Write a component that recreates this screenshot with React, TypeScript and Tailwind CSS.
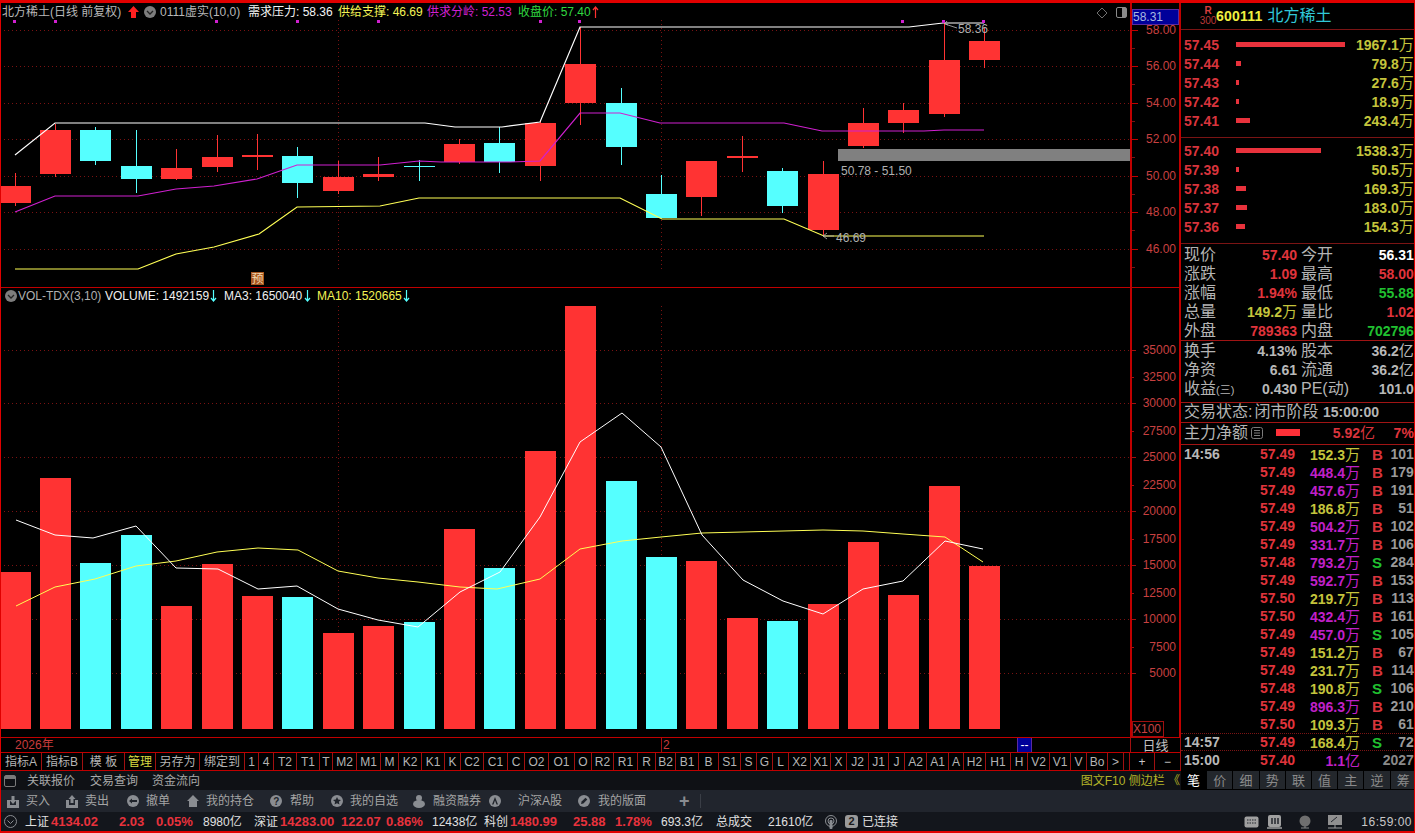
import * as React from "react";

const candles = [
  [186, 203, 173, 206, 0], [130, 174, 124, 177, 0], [130, 161, 127, 165, 1], [166, 179, 130, 193, 1],
  [168, 179, 149, 180, 0], [157, 167, 135, 172, 0], [155, 157, 134, 170, 0], [156, 183, 147, 198, 1],
  [177, 191, 161, 194, 0], [174, 177, 157, 181, 0], [166, 167, 160, 181, 1], [144, 162, 139, 164, 0],
  [143, 162, 127, 173, 1], [123, 166, 121, 181, 0], [64, 103, 27, 125, 0], [103, 147, 88, 165, 1],
  [194, 218, 175, 218, 1], [161, 197, 161, 216, 0], [156, 158, 136, 172, 0], [171, 206, 168, 213, 1],
  [174, 230, 161, 235, 0], [123, 146, 108, 148, 0], [110, 123, 103, 133, 0], [60, 114, 23, 117, 0],
  [41, 60, 28, 68, 0],
];

const bars = [
  [572, 0], [478, 0], [563, 1], [535, 1], [606, 0], [564, 0], [596, 0], [597, 1], [633, 0], [626, 0],
  [622, 1], [529, 0], [568, 1], [451, 0], [306, 0], [481, 1], [557, 1], [561, 0], [618, 0], [621, 1],
  [604, 0], [542, 0], [595, 0], [486, 0], [566, 0],
];

const barX = [0, 40, 80, 121, 161, 202, 242, 282, 323, 363, 404, 444, 484, 525, 565, 606, 646, 686, 727, 767, 808, 848, 888, 929, 969];

const whiteLine = "15,155 55,123 425,123 455,127 502,127 540,122 580,27 909,27 943,23 984,23";
const purpleLine = "15,212 55,196 138,196 176,189 214,186 257,179 297,165 380,165 419,161 441,162 510,162 540,161 580,113 620,113 660,123 784,123 822,131 924,131 944,130 984,130";
const yellowLine = "15,269 138,269 176,254 214,247 259,234 297,207 380,206 419,198 620,198 662,219 784,219 824,236 984,236";
const ma3Line = "16,520 55,535 93,538 136,526 176,568 218,569 258,589 297,586 338,609 378,620 418,627 460,592 500,572 540,517 580,442 622,413 661,447 702,535 743,580 783,601 823,614 863,589 903,581 945,541 983,549";
const ma10Line = "16,606 55,587 95,579 136,566 176,561 217,552 258,548 298,550 338,571 378,578 418,582 460,587 497,589 540,579 580,549 622,541 661,537 702,533 743,532 783,531 823,530 863,531 903,534 945,537 983,562";

const dots = [14, 55, 216, 297, 378, 540, 579, 902, 943, 983];

const priceTicks = [
  [30, "58.00"], [66, "56.00"], [103, "54.00"], [139, "52.00"], [176, "50.00"], [212, "48.00"], [249, "46.00"],
];
const volTicks = [
  [350, "35000", 1], [377, "32500", 0], [403, "30000", 1], [431, "27500", 0], [457, "25000", 1], [485, "22500", 0],
  [511, "20000", 1], [539, "17500", 0], [565, "15000", 1], [593, "12500", 0], [619, "10000", 1], [647, "7500", 0], [673, "5000", 1],
];

const RED = "#ff3333";
const CYAN = "#55ffff";
const DOT = "#7a1212";

const KlineChart = () => (
  <svg className="block w-[1129px] h-[284px]" viewBox="1 3 1129 284">
    {priceTicks.map(([y]) => (
      <line key={y} x1="4" x2="1130" y1={(y as number) + 0.5} y2={(y as number) + 0.5} stroke={DOT} strokeDasharray="1 3" />
    ))}
    <line x1="338.500" x2="338.500" y1="20" y2="272" stroke={DOT} strokeDasharray="1 3" />
    <line x1="661.500" x2="661.500" y1="20" y2="272" stroke={DOT} strokeDasharray="1 3" />
    {candles.map((c, i) => {
      const x = barX[i];
      const color = c[4] ? CYAN : RED;
      return (
        <g key={i}>
          <line x1={x + 15.5} x2={x + 15.5} y1={c[2]} y2={c[3]} stroke={color} />
          <rect x={x} y={c[0]} width="31" height={c[1] - c[0]} fill={color} />
        </g>
      );
    })}
    <rect x="838" y="149" width="292" height="12" fill="#808080" />
    <polyline points={yellowLine} fill="none" stroke="#ffff55" strokeWidth="1.2" />
    <polyline points={purpleLine} fill="none" stroke="#d020d0" strokeWidth="1.2" />
    <polyline points={whiteLine} fill="none" stroke="#ffffff" strokeWidth="1.2" />
    {dots.map((x) => (
      <rect key={x} x={x - 1} y="20" width="3" height="3" fill="#d020d0" />
    ))}
    <path d="M948 25l-3-1.500 2-2.500M945 24l12 4" fill="none" stroke="#bbbbbb" strokeWidth="0.8" />
    <path d="M827 233l-4 3 4 3M823 236h11" fill="none" stroke="#bbbbbb" strokeWidth="0.8" />
    <text x="958" y="33" fill="#b0b0b0" fontSize="12">58.36</text>
    <text x="836" y="242" fill="#b0b0b0" fontSize="12">46.69</text>
    <text x="841" y="175" fill="#b0b0b0" fontSize="12">50.78 - 51.50</text>
    <rect x="251" y="272" width="13" height="13" fill="#a8561f" />
    <text x="251.500" y="283" fill="#f0d8b0" fontSize="12">预</text>
  </svg>
);

const KlineAxis = () => (
  <svg className="block w-[47px] h-[284px]" viewBox="1132 3 47 284">
    {priceTicks.map(([y, label]) => (
      <g key={y}>
        <line x1="1132" x2="1138" y1={(y as number) + 0.5} y2={(y as number) + 0.5} stroke="#c00000" />
        <line x1="1132" x2="1135" y1={(y as number) + 18.5} y2={(y as number) + 18.5} stroke={DOT} />
        <text x="1176" y={(y as number) + 4} textAnchor="end" fill="#c84040" fontSize="12">{label}</text>
      </g>
    ))}
    <rect x="1132.500" y="9.500" width="46" height="15" fill="#00009a" stroke="#5a2aa0" />
    <text x="1133" y="21" fill="#a8b8e0" fontSize="12">58.31</text>
  </svg>
);

const VolumeChart = () => (
  <svg className="block w-[1129px] h-[449px]" viewBox="1 288 1129 449">
    {volTicks.filter((t) => t[2]).map(([y]) => (
      <line key={y} x1="4" x2="1130" y1={(y as number) + 0.5} y2={(y as number) + 0.5} stroke={DOT} strokeDasharray="1 3" />
    ))}
    <line x1="338.500" x2="338.500" y1="306" y2="729" stroke={DOT} strokeDasharray="1 3" />
    <line x1="661.500" x2="661.500" y1="306" y2="729" stroke={DOT} strokeDasharray="1 3" />
    {bars.map((b, i) => (
      <rect key={i} x={barX[i]} y={b[0]} width="31" height={729 - (b[0] as number)} fill={b[1] ? CYAN : RED} />
    ))}
    <polyline points={ma10Line} fill="none" stroke="#ffff55" strokeWidth="1" />
    <polyline points={ma3Line} fill="none" stroke="#ffffff" strokeWidth="1" />
  </svg>
);

const VolumeAxis = () => (
  <svg className="block w-[47px] h-[449px]" viewBox="1132 288 47 449">
    {volTicks.map(([y, label, major]) => (
      <g key={y as number}>
        <line x1="1132" x2={major ? 1136 : 1134} y1={(y as number) + 0.5} y2={(y as number) + 0.5} stroke="#a01010" />
        <text x="1176" y={(y as number) + 4} textAnchor="end" fill="#c84040" fontSize="12">{label}</text>
      </g>
    ))}
    <rect x="1132.500" y="721.500" width="31" height="15" fill="none" stroke="#a01010" />
    <text x="1133" y="733" fill="#c84040" fontSize="12">X100</text>
  </svg>
);

const UpArrow = () => (
  <svg className="w-[11px] h-[12px]" viewBox="0 0 11 12">
    <path d="M5.500 0L11 6H8v6H3V6H0z" fill="#ff2020" />
  </svg>
);

const ThinArrow = ({ color, down }: { color: string; down?: boolean }) => (
  <svg className="w-[7px] h-[12px]" viewBox="0 0 7 12">
    {down ? (
      <path d="M3.500 0v11M1 8l2.500 3L6 8" fill="none" stroke={color} strokeWidth="1.200" />
    ) : (
      <path d="M3.500 12V1M1 4l2.500-3L6 4" fill="none" stroke={color} strokeWidth="1.200" />
    )}
  </svg>
);

const Chevron = ({ size }: { size: string }) => (
  <svg className={size} viewBox="0 0 12 12">
    <circle cx="6" cy="6" r="6" fill="#7d7d7d" />
    <path d="M3 5l3 3 3-3" fill="none" stroke="#222222" strokeWidth="1.300" />
  </svg>
);

const tabs = [
  ["指标A", "w-[41px]"], ["指标B", "w-[41px]"], ["模 板", "w-[42px]"], ["管理", "w-[31px]"], ["另存为", "w-[44px]"], ["绑定到", "w-[45px]"],
  ["1", "w-[14px]"], ["4", "w-[15px]"], ["T2", "w-[23px]"], ["T1", "w-[23px]"], ["T", "w-[13px]"], ["M2", "w-[24px]"], ["M1", "w-[24px]"], ["M", "w-[18px]"],
  ["K2", "w-[23px]"], ["K1", "w-[23px]"], ["K", "w-[16px]"], ["C2", "w-[23px]"], ["C1", "w-[24px]"], ["C", "w-[17px]"], ["O2", "w-[24px]"], ["O1", "w-[26px]"],
  ["O", "w-[17px]"], ["R2", "w-[22px]"], ["R1", "w-[24px]"], ["R", "w-[18px]"], ["B2", "w-[20px]"], ["B1", "w-[23px]"], ["B", "w-[20px]"], ["S1", "w-[22px]"],
  ["S", "w-[16px]"], ["G", "w-[16px]"], ["L", "w-[16px]"], ["X2", "w-[22px]"], ["X1", "w-[20px]"], ["X", "w-[16px]"], ["J2", "w-[22px]"], ["J1", "w-[20px]"],
  ["J", "w-[16px]"], ["A2", "w-[22px]"], ["A1", "w-[22px]"], ["A", "w-[15px]"], ["H2", "w-[22px]"], ["H1", "w-[25px]"], ["H", "w-[17px]"], ["V2", "w-[22px]"],
  ["V1", "w-[21px]"], ["V", "w-[16px]"], ["Bo", "w-[21px]"], [">", "w-[16px]"], ["", "w-[6px]"],
];

const asks = [
  ["57.45", "w-[109px]", "1967.1"], ["57.44", "w-[5px]", "79.8"], ["57.43", "w-[3px]", "27.6"], ["57.42", "w-[3px]", "18.9"], ["57.41", "w-[14px]", "243.4"],
];
const bids = [
  ["57.40", "w-[85px]", "1538.3"], ["57.39", "w-[3px]", "50.5"], ["57.38", "w-[10px]", "169.3"], ["57.37", "w-[11px]", "183.0"], ["57.36", "w-[9px]", "154.3"],
];

const DepthRow = ({ row }: { row: string[] }) => (
  <div className="flex items-center h-[19px] pl-[3px] pr-[3px] font-bold text-[14px] leading-none">
    <span className="w-[52px] text-[#d8343c]">{row[0]}</span>
    <span className="w-[120px]">
      <span className={`block h-[5px] bg-[#e8323c] ${row[1]}`} />
    </span>
    <span className="flex-1 text-right text-[#c4c43c] whitespace-nowrap">
      {row[2]}<span className="font-normal text-[15px]">万</span>
    </span>
  </div>
);

const Quote = ({ l1, v1, c1, l2, v2, c2 }: { l1: React.ReactNode; v1: React.ReactNode; c1: string; l2: string; v2: React.ReactNode; c2: string }) => (
  <div className="flex items-center h-[19px] pl-[3px] pr-[3px] leading-none">
    <span className="w-[50px] text-[16px] text-[#b4b4b4] whitespace-nowrap">{l1}</span>
    <span className={`w-[63px] text-right font-bold text-[14px] whitespace-nowrap ${c1}`}>{v1}</span>
    <span className="w-[50px] ml-[4px] text-[16px] text-[#b4b4b4] whitespace-nowrap">{l2}</span>
    <span className={`flex-1 text-right font-bold text-[14px] whitespace-nowrap ${c2}`}>{v2}</span>
  </div>
);

const Unit = ({ t }: { t: string }) => <span className="font-normal text-[15px]">{t}</span>;

const trades = [
  ["14:56", "57.49", "152.3", "B", "101", 0], ["", "57.49", "448.4", "B", "179", 1], ["", "57.49", "457.6", "B", "191", 1], ["", "57.49", "186.8", "B", "51", 0],
  ["", "57.49", "504.2", "B", "102", 1], ["", "57.49", "331.7", "B", "106", 1], ["", "57.48", "793.2", "S", "284", 1], ["", "57.49", "592.7", "B", "153", 1],
  ["", "57.50", "219.7", "B", "113", 0], ["", "57.50", "432.4", "B", "161", 1], ["", "57.49", "457.0", "S", "105", 1], ["", "57.49", "151.2", "B", "67", 0],
  ["", "57.49", "231.7", "B", "114", 0], ["", "57.48", "190.8", "S", "106", 0], ["", "57.49", "896.3", "B", "210", 1], ["", "57.50", "109.3", "B", "61", 0],
  ["14:57", "57.49", "168.4", "S", "72", 0],
];

const TradeRow = ({ row }: { row: (string | number)[] }) => (
  <div className={`flex items-center h-[18px] pl-[3px] pr-[3px] font-bold text-[14px] leading-none ${row[0] === "14:57" ? "border-y border-dotted border-[#7a1414]" : ""}`}>
    <span className="w-[76px] text-[#b8b8b8]">{row[0]}</span>
    <span className="w-[34px] text-[#e0343c]">{row[1]}</span>
    <span className={`w-[66px] text-right whitespace-nowrap ${row[5] ? "text-[#c020c8]" : "text-[#c4c43c]"}`}>
      {row[2]}<Unit t="万" />
    </span>
    <span className={`w-[17px] ml-[12px] text-[15px] font-bold ${row[3] === "S" ? "text-[#20c030]" : "text-[#d8343c]"}`}>{row[3]}</span>
    <span className="flex-1 text-right text-[#9a9a9a]">{row[4]}</span>
  </div>
);

const InBox = ({ up }: { up?: boolean }) => (
  <svg className="w-[12px] h-[13px]" viewBox="0 0 12 13">
    <path d="M0 5h3v5h6V5h3v8H0z" fill="#8a8d92" />
    <path d={up ? "M6 0l3.500 4H7.500v4h-3V4H2.500z" : "M6 9L2.500 5h2V1h3v4h2z"} fill="#8a8d92" />
  </svg>
);

const Disc = ({ children }: { children: React.ReactNode }) => (
  <svg className="w-[12px] h-[12px]" viewBox="0 0 12 12">
    <circle cx="6" cy="6" r="6" fill="#8a8d92" />
    {children}
  </svg>
);

const tools = [
  ["买入", "w-[59px]", "ml-[7px]", <InBox key="a" />],
  ["卖出", "w-[61px]", "ml-[7px]", <InBox key="b" up />],
  ["撤单", "w-[60px]", "ml-[7px]", <Disc key="c"><path d="M2 6l3-2.500V5h5v2H5v1.500z" fill="#20242b" /></Disc>],
  ["我的持仓", "w-[83px]", "ml-[7px]", <svg key="d" className="w-[12px] h-[12px]" viewBox="0 0 12 12"><path d="M6 0l6 6h-2v6H2V6H0z" fill="#8a8d92" /></svg>],
  ["帮助", "w-[61px]", "ml-[8px]", <Disc key="e"><text x="3.300" y="10" fontSize="10" fontWeight="bold" fill="#20242b">?</text></Disc>],
  ["我的自选", "w-[82px]", "ml-[7px]", <Disc key="f"><path d="M6 2l1.200 2.600 2.800.3-2.100 1.900.6 2.800L6 8.200 3.500 9.600l.6-2.800L2 4.900l2.800-.3z" fill="#20242b" /></Disc>],
  ["融资融券", "w-[76px]", "ml-[8px]", <svg key="g" className="w-[12px] h-[13px]" viewBox="0 0 12 13"><circle cx="6" cy="3" r="3" fill="#8a8d92" /><ellipse cx="6" cy="9" rx="6" ry="4" fill="#8a8d92" /></svg>],
  ["沪深A股", "w-[89px]", "ml-[17px]", <Disc key="h"><path d="M6 2l3 7.500H7.500L6 5.500 4.500 9.500H3z" fill="#20242b" /></Disc>],
  ["我的版面", "w-[90px]", "ml-[8px]", <Disc key="i"><path d="M3 9l.6-2.400L7.500 2.700l1.800 1.800L5.400 8.400z" fill="#20242b" /></Disc>],
];

const sideTabs = ["笔", "价", "细", "势", "联", "值", "主", "逆", "筹"];

const St = ({ w, className, children }: { w: string; className: string; children: React.ReactNode }) => (
  <span className={`${w} ${className} whitespace-nowrap`}>{children}</span>
);

const App = () => {
  const num = "font-bold text-[13px] text-[#e8323c]";
  const plain = "text-[12px] text-[#e0e0e0]";
  return (
    <div className="w-[1415px] h-[833px] overflow-hidden bg-black border-t-[3px] border-l border-r border-[#e00000] flex flex-col font-['Liberation_Sans','Noto_Sans_CJK_SC',sans-serif]">
      <div className="flex h-[787px]">
        <div className="w-[1180px] flex flex-col">
          {/* K line pane */}
          <div className="flex h-[285px] border-b border-[#c00000]">
            <div className="relative w-[1129px]">
              <KlineChart />
              <div className="absolute left-[1px] top-[2px] h-[14px] flex items-center text-[12px] leading-none whitespace-nowrap text-[#b8b8b8]">
                <span className="w-[126px]">北方稀土(日线 前复权)</span>
                <UpArrow />
                <span className="ml-[5px]"><Chevron size="block w-[12px] h-[12px]" /></span>
                <span className="ml-[4px] w-[88px]">0111虚实(10,0)</span>
                <span className="w-[90px] text-[#f4f4f4]">需求压力: 58.36</span>
                <span className="w-[89px] text-[#f4f455]">供给支撑: 46.69</span>
                <span className="w-[91px] text-[#d020d0]">供求分岭: 52.53</span>
                <span className="w-[74px] text-[#30d840]">收盘价: 57.40</span>
                <ThinArrow color="#ff3030" />
              </div>
              <svg className="absolute left-[1095px] top-[3px] w-[34px] h-[14px]" viewBox="0 0 34 14">
                <path d="M6 2l5 5-5 5-5-5z" fill="none" stroke="#707070" />
                <rect x="20.500" y="1.500" width="10" height="10" rx="1.500" fill="none" stroke="#8a8a8a" />
                <rect x="26" y="2" width="4" height="9" fill="#8a8a8a" />
              </svg>
            </div>
            <div className="w-[51px] border-x-2 border-[#c00000]">
              <KlineAxis />
            </div>
          </div>
          {/* volume pane */}
          <div className="flex h-[450px] border-b border-[#c00000]">
            <div className="relative w-[1129px]">
              <VolumeChart />
              <div className="absolute left-[4px] top-[1px] h-[14px] flex items-center text-[12px] leading-none whitespace-nowrap text-[#b0b0b0]">
                <Chevron size="block w-[12px] h-[12px]" />
                <span className="ml-[1px] w-[87px]">VOL-TDX(3,10)</span>
                <span className="text-[#f0f0f0] w-[105px]">VOLUME: 1492159</span>
                <ThinArrow color={CYAN} down />
                <span className="ml-[7px] w-[80px] text-[#f0f0f0]">MA3: 1650040</span>
                <ThinArrow color={CYAN} down />
                <span className="ml-[6px] w-[86px] text-[#f4f455]">MA10: 1520665</span>
                <ThinArrow color={CYAN} down />
              </div>
            </div>
            <div className="w-[51px] border-x-2 border-[#c00000]">
              <VolumeAxis />
            </div>
          </div>
          {/* date axis */}
          <div className="flex h-[15px] border-b border-[#c00000] text-[12px] leading-none">
            <div className="w-[660px] pl-[14px] flex items-center text-[#c83c3c]">2026年</div>
            <div className="w-[356px] border-l border-[#a01010] pl-[1px] flex items-center text-[#c83c3c]">2</div>
            <div className="w-[15px] bg-[#00009a] border-x border-[#5a2aa0] text-white flex items-center justify-center">--</div>
            <div className="flex-1" />
            <div className="w-[51px] border-x border-[#a01010] flex items-center justify-center text-[13px] text-[#c0c0c0]">日线</div>
          </div>
          {/* tab strip */}
          <div className="flex h-[18px] border-b border-[#c00000] text-[12px] leading-none">
            {tabs.map(([t, w], i) => (
              <div key={i} className={`${w} shrink-0 border-r border-[#a01010] flex items-center justify-center whitespace-nowrap ${t === "管理" ? "text-[#d8d840]" : "text-[#b4b4b4]"}`}>
                {t}
              </div>
            ))}
            <div className="w-[25px] border-r border-[#a01010] flex items-center justify-center text-[#c8c8c8]">+</div>
            <div className="flex-1 border-r border-[#a01010] flex items-center justify-center text-[#c8c8c8]">−</div>
          </div>
          {/* info strip */}
          <div className="flex-1 flex items-center bg-[#0f1115] text-[12px] leading-none text-[#a8a8a8]">
            <svg className="ml-[3px] w-[12px] h-[12px]" viewBox="0 0 12 12">
              <rect x="0.500" y="0.500" width="11" height="11" rx="1.500" fill="none" stroke="#7a7a7a" />
              <rect x="1" y="1" width="10" height="3" fill="#7a7a7a" />
            </svg>
            <span className="ml-[11px] w-[63px]">关联报价</span>
            <span className="w-[62px]">交易查询</span>
            <span>资金流向</span>
            <span className="ml-auto mr-[1px] text-[#b4b428]">图文F10 侧边栏 《</span>
          </div>
        </div>

        {/* right panel */}
        <div className="flex-1 flex flex-col">
          <div className="h-[27px] border-b border-[#7a1414] flex items-center">
            <div className="ml-[19px] w-[16px] flex flex-col items-center leading-none">
              <span className="text-[10px] font-bold text-[#d83c3c]">R</span>
              <span className="text-[10px] text-[#b83838]">300</span>
            </div>
            <span className="font-bold text-[14px] text-[#f0f040] tracking-[0.2px]">600111</span>
            <span className="ml-[5px] text-[16px] text-[#30c8d8] leading-none">北方稀土</span>
          </div>
          <div className="h-[108px] border-b border-[#7a1414] pt-[5px]">
            {asks.map((r) => <DepthRow key={r[0]} row={r} />)}
          </div>
          <div className="h-[106px] border-b border-[#7a1414] pt-[3px]">
            {bids.map((r) => <DepthRow key={r[0]} row={r} />)}
          </div>
          <div className="h-[97px] border-b border-[#a01414] pt-[1px]">
            <Quote l1="现价" v1="57.40" c1="text-[#e0343c]" l2="今开" v2="56.31" c2="text-white" />
            <Quote l1="涨跌" v1="1.09" c1="text-[#e0343c]" l2="最高" v2="58.00" c2="text-[#e0343c]" />
            <Quote l1="涨幅" v1="1.94%" c1="text-[#e0343c]" l2="最低" v2="55.88" c2="text-[#20c030]" />
            <Quote l1="总量" v1={<>149.2<Unit t="万" /></>} c1="text-[#c4c43c]" l2="量比" v2="1.02" c2="text-[#e0343c]" />
            <Quote l1="外盘" v1="789363" c1="text-[#e0343c]" l2="内盘" v2="702796" c2="text-[#20c030]" />
          </div>
          <div className="h-[62px] border-b border-[#a01414]">
            <Quote l1="换手" v1="4.13%" c1="text-[#b8b8b8]" l2="股本" v2={<>36.2<Unit t="亿" /></>} c2="text-[#b8b8b8]" />
            <Quote l1="净资" v1="6.61" c1="text-[#b8b8b8]" l2="流通" v2={<>36.2<Unit t="亿" /></>} c2="text-[#b8b8b8]" />
            <Quote l1={<>收益<span className="text-[11px]">(三)</span></>} v1="0.430" c1="text-[#b8b8b8]" l2="PE(动)" v2="101.0" c2="text-[#b8b8b8]" />
          </div>
          <div className="h-[20px] border-b border-[#a01414] flex items-center pl-[3px] pb-[1px] text-[16px] leading-none text-[#b4b4b4] whitespace-nowrap">
            <span className="w-[139px]">交易状态:<span className="ml-[2px]">闭市阶段</span></span>
            <span className="font-bold text-[14px]">15:00:00</span>
          </div>
          <div className="h-[22px] border-b border-[#a01414] flex items-center pl-[3px] pr-[3px] pb-[2px] leading-none whitespace-nowrap">
            <span className="w-[67px] text-[16px] text-[#b4b4b4]">主力净额</span>
            <svg className="w-[12px] h-[12px]" viewBox="0 0 12 12">
              <rect x="0.500" y="0.500" width="11" height="11" rx="2" fill="none" stroke="#7a7a7a" />
              <path d="M3 3.500h6M3 6h6M3 8.500h6" stroke="#7a7a7a" />
            </svg>
            <span className="ml-[13px] w-[24px] h-[7px] bg-[#ff3038]" />
            <span className="w-[75px] text-right font-bold text-[14px] text-[#d8343c]">5.92<Unit t="亿" /></span>
            <span className="flex-1 text-right font-bold text-[14px] text-[#e0343c]">7%</span>
          </div>
          <div className="h-[326px]">
            {trades.map((r, i) => <TradeRow key={i} row={r} />)}
            <div className="flex items-center h-[18px] pl-[3px] pr-[3px] font-bold text-[14px] leading-none">
              <span className="w-[76px] text-[#b8b8b8]">15:00</span>
              <span className="w-[34px] text-[#e0343c]">57.40</span>
              <span className="w-[66px] text-right text-[#c020c8] whitespace-nowrap">1.1<Unit t="亿" /></span>
              <span className="flex-1 text-right text-[#8a8a8a]">2027</span>
            </div>
          </div>
          <div className="h-[18px] flex text-[13px] leading-none">
            {sideTabs.map((t, i) => (
              <div key={t} className={`flex-1 flex items-center justify-center border-r border-black ${i === 0 ? "bg-black text-white" : "bg-[#23272c] text-[#8a8a8a]"}`}>
                {t}
              </div>
            ))}
          </div>
        </div>
      </div>

      {/* toolbar */}
      <div className="h-[22px] flex items-center bg-[#21252d] pl-[6px] text-[12px] leading-none text-[#a4a4a4]">
        {tools.map(([t, w, gap, icon]) => (
          <div key={t as string} className={`${w} flex items-center shrink-0`}>
            {icon}
            <span className={gap as string}>{t}</span>
          </div>
        ))}
        <span className="ml-[11px] text-[18px] font-bold text-[#8a8d92]">+</span>
        <span className="ml-[10px] w-px h-[14px] bg-[#3a3e46]" />
      </div>

      {/* status bar */}
      <div className="h-[21px] flex items-center bg-[#13161c] border-b-2 border-[#e00000] leading-none">
        <svg className="ml-[3px] mr-[8px] w-[13px] h-[13px] shrink-0" viewBox="0 0 13 13">
          <circle cx="6.500" cy="6.500" r="6" fill="none" stroke="#8a8d92" />
          <path d="M3.500 5.500l3 3 3-3" fill="none" stroke="#8a8d92" />
        </svg>
        <St w="w-[26px]" className={plain}>上证</St>
        <St w="w-[68px]" className={num}>4134.02</St>
        <St w="w-[37px]" className={num}>2.03</St>
        <St w="w-[47px]" className={num}>0.05%</St>
        <St w="w-[51px]" className={plain}>8980亿</St>
        <St w="w-[26px]" className={plain}>深证</St>
        <St w="w-[61px]" className={num}>14283.00</St>
        <St w="w-[45px]" className={num}>122.07</St>
        <St w="w-[46px]" className={num}>0.86%</St>
        <St w="w-[52px]" className={plain}>12438亿</St>
        <St w="w-[26px]" className={plain}>科创</St>
        <St w="w-[63px]" className={num}>1480.99</St>
        <St w="w-[42px]" className={num}>25.88</St>
        <St w="w-[46px]" className={num}>1.78%</St>
        <St w="w-[55px]" className={plain}>693.3亿</St>
        <St w="w-[52px]" className={plain}>总成交</St>
        <St w="w-[56px]" className={plain}>21610亿</St>
        <svg className="ml-[1px] mr-[8px] w-[12px] h-[14px] shrink-0" viewBox="0 0 12 14">
          <circle cx="6" cy="6" r="5.500" fill="none" stroke="#8a8d92" />
          <circle cx="6" cy="6" r="3" fill="none" stroke="#8a8d92" />
          <rect x="4.500" y="5" width="3" height="9" rx="1" fill="#8a8d92" />
        </svg>
        <span className="w-[13px] h-[13px] rounded-[3px] bg-[#9a9a9a] text-[#1a1a1a] text-[11px] font-bold flex items-center justify-center">2</span>
        <span className="ml-[4px] text-[12px] text-[#e0e0e0]">已连接</span>
        <svg className="ml-auto w-[106px] h-[16px] shrink-0" viewBox="0 0 106 16">
          <rect x="0.500" y="2.500" width="14" height="11" rx="2" fill="#a0a0a0" />
          <path d="M3 6h9M3 9h9" stroke="#23262c" strokeDasharray="1.500 1" />
          <rect x="24" y="1" width="13" height="12" rx="2" fill="#a0a0a0" />
          <path d="M28 4v6M31 4v6M34 4v6" stroke="#23262c" strokeWidth="1.500" />
          <path d="M23 14h15" stroke="#a0a0a0" strokeWidth="1.500" />
          <circle cx="61" cy="7" r="5.500" fill="#6f6f6f" />
          <path d="M57 14h8M61 12v2" stroke="#8a8a8a" />
          <rect x="84" y="1" width="14" height="10" fill="#909090" />
          <path d="M87 8l6-5" stroke="#23262c" />
          <path d="M84 14h14M91 11v3" stroke="#a0a0a0" />
        </svg>
        <span className="ml-[11px] mr-[2px] text-[12px] tracking-[0.5px] text-[#c8c8c8] whitespace-nowrap">16:59:00</span>
      </div>
    </div>
  );
};

export default App;
